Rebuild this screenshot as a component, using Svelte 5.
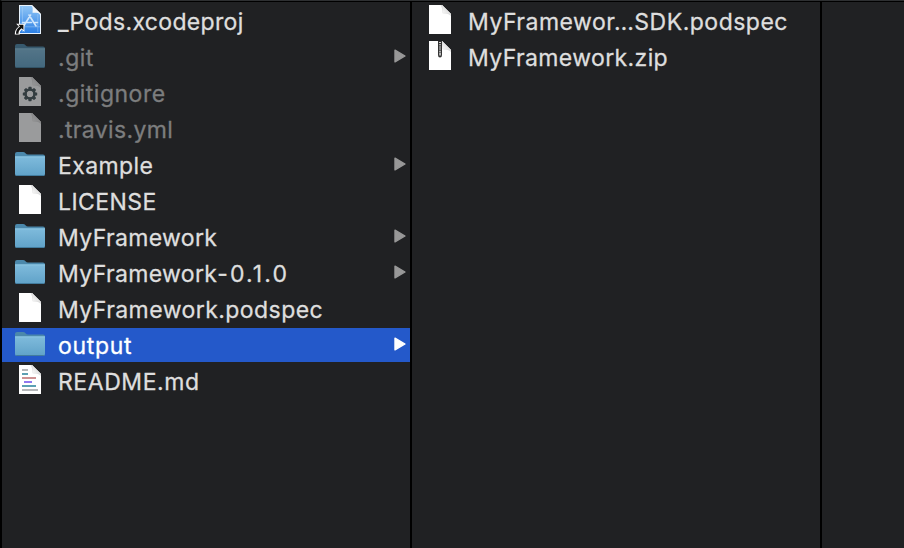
<script>
  const columns = [
    [
      { name: '_Pods.xcodeproj', icon: 'xcode', spacing: 0.33 },
      { name: '.git', icon: 'folder', dim: true, arrow: true, spacing: 0.5 },
      { name: '.gitignore', icon: 'gear', dim: true, spacing: 0.5 },
      { name: '.travis.yml', icon: 'file', dim: true, spacing: 0.35 },
      { name: 'Example', icon: 'folder', arrow: true, spacing: 0.4 },
      { name: 'LICENSE', icon: 'file', spacing: 0.42 },
      { name: 'MyFramework', icon: 'folder', arrow: true, spacing: 0.36 },
      { name: 'MyFramework', version: '-0.1.0', icon: 'folder', arrow: true, spacing: 0.36 },
      { name: 'MyFramework.podspec', icon: 'file', spacing: 0.44 },
      { name: 'output', icon: 'folder', arrow: true, selected: true, spacing: 0.7 },
      { name: 'README.md', icon: 'markdown', spacing: 0.56 },
    ],
    [
      { name: 'MyFramewor…SDK.podspec', icon: 'file', spacing: 0.5 },
      { name: 'MyFramework.zip', icon: 'zip', spacing: 0.38 },
    ],
    [],
  ];
  const teeth = [0, 45, 90, 135, 180, 225, 270, 315];
</script>

<svg class="defs" aria-hidden="true">
  <defs>
    <linearGradient id="folder" x1="0" y1="0" x2="0" y2="1">
      <stop offset="0" stop-color="#7fbbdc" />
      <stop offset="1" stop-color="#60a2c8" />
    </linearGradient>
    <linearGradient id="xcode" x1="0" y1="0" x2="0" y2="1">
      <stop offset="0" stop-color="#8fc5f6" />
      <stop offset="1" stop-color="#2c7fe4" />
    </linearGradient>
    <linearGradient id="fold" x1="0" y1="1" x2="1" y2="0">
      <stop offset="0" stop-color="#fff" />
      <stop offset="1" stop-color="#c4c4c4" />
    </linearGradient>
  </defs>
</svg>

{#snippet page()}
  <path d="M5 1H18L27 10V30H5Z" fill="#fff" />
  <path d="M16.5 1H18L27 10V12C25 10 22 9.3 18.5 9.3C18.5 6 18 3 16.5 1Z" fill="#dedede" />
  <path d="M18 1L27 10C24.5 8.8 22 8.5 18.5 8.7C18.8 6 18.8 3.5 18 1Z" fill="url(#fold)" />
{/snippet}

<div class="browser">
  {#each columns as items}
    <div class="column">
      {#each items as item}
        <div class="row" class:dim={item.dim} class:selected={item.selected}>
          <svg class="icon" viewBox="0 0 32 34">
            {#if item.icon === 'folder'}
              <path d="M1 10V6Q1 4 3 4H9Q10.5 4 11.5 5.2T14 6.5H29Q31 6.5 31 8.5V10Z" fill="#4b88ab" />
              <path d="M1 8.5H31V26Q31 28 29 28H3Q1 28 1 26Z" fill="url(#folder)" />
              <path d="M1 8.5H31V9.3H1Z" fill="#93cbe7" />
              <path d="M1.2 27Q2 28 3 28H29Q30 28 30.8 27Z" fill="#427c9e" />
            {:else if item.icon === 'xcode'}
              <path d="M5 1H18L27 10V30H5Z" fill="#e8f2fc" />
              <path d="M6 2H17.5L26 10.5V29H6Z" fill="url(#xcode)" />
              <path d="M18 1L27 10C24.5 8.8 22 8.5 18.5 8.7C18.8 6 18.8 3.5 18 1Z" fill="#f1f5f9" />
              <g fill="none" stroke="#cfe6fd" stroke-width="1.6" stroke-linecap="round">
                <path d="M16.6 11L10 21.5M15 11L22 22M8.5 18.5H17.5M21 18.5H23.5" />
              </g>
              <path d="M6 22.8H26M8.5 3V28M23.8 10V28" fill="none" stroke="#b5dafb" stroke-width=".4" />
              <path d="M2.2 19.8H10.4V28L7.8 25.6Q5.4 27.4 5.8 30.6H.8Q.4 25.6 4.8 22.4Z" fill="#fff" />
              <path d="M4.2 20.8H9.4V26L7.6 24.2Q4.2 26.4 4.5 29.8H2Q1.7 25.5 6 22.6Z" fill="#111" />
            {:else}
              {@render page()}
              {#if item.icon === 'gear'}
                <g fill="#435459">
                  {#each teeth as angle}
                    <rect x="14.4" y="10.8" width="3.2" height="3.6" rx=".6" transform="rotate({angle} 16 18)" />
                  {/each}
                </g>
                <circle cx="16" cy="18" r="4.5" fill="none" stroke="#435459" stroke-width="2.6" />
              {:else if item.icon === 'markdown'}
                <rect x="8" y="5" width="6" height="2" fill="#b5b7b9" />
                <rect x="8" y="9" width="6" height="2" fill="#5ca0b3" />
                <rect x="8" y="13" width="14" height="2" fill="#cd9192" />
                <rect x="10" y="17" width="8" height="2" fill="#9078ef" />
                <rect x="8" y="21" width="14" height="2" fill="#5ca0b3" />
                <rect x="8" y="25" width="16" height="2" fill="#b5b7b9" />
              {:else if item.icon === 'zip'}
                <path d="M14 1H18V15Q18 17.5 16 17.5T14 15Z" fill="#333" />
                <path d="M16 2V12" stroke="#d5d5d5" stroke-width="2" stroke-dasharray="1 1.2" />
                <rect x="15.3" y="12.5" width="1.5" height="3" fill="#ddd" />
              {/if}
            {/if}
          </svg>
          <span class="name" style:letter-spacing="{item.spacing}px">{item.name}{#if item.version}<span class="version">{item.version}</span>{/if}</span>
          {#if item.arrow}
            <svg class="arrow" viewBox="0 0 12 14">
              <path d="M1 1.2L11 7L1 12.8Z" />
            </svg>
          {/if}
        </div>
      {/each}
    </div>
  {/each}
</div>

<style>
  :global(body) { margin: 0; background: #202123; overflow: hidden; }
  .defs { position: absolute; width: 0; height: 0; }
  .browser {
    box-sizing: border-box;
    width: 904px;
    height: 548px;
    display: flex;
    background: #202123;
    border-top: 1px solid #2e3032;
    border-left: 2px solid #000;
    font-family: Inter, 'Liberation Sans', sans-serif;
    font-size: 23px;
    -webkit-text-stroke: .3px currentColor;
    color: #dedede;
  }
  .column {
    box-sizing: border-box;
    width: 410px;
    flex: none;
    padding-top: 2px;
    border-top: 1px solid #000;
    border-right: 2px solid #000;
    display: flex;
    flex-direction: column;
    gap: 2px;
  }
  .column:last-child { width: 82px; border-right: 0; }
  .row {
    height: 34px;
    display: flex;
    align-items: center;
    padding: 0 4px 0 12px;
  }
  .icon { width: 32px; height: 34px; flex: none; margin-right: 12px; overflow: visible; }
  .name { flex: 1; line-height: 34px; padding-top: 1px; white-space: nowrap; }
  .version { letter-spacing: 2.1px; }
  .arrow { width: 12px; height: 14px; margin-bottom: 2px; fill: #989898; stroke: #989898; stroke-width: 1.4; stroke-linejoin: round; }
  .dim .name { color: #7c7d7e; }
  .dim .icon { opacity: .55; }
  .selected { background: #2459ca; color: #fff; }
  .selected .arrow { fill: #fff; stroke: #fff; }
</style>
